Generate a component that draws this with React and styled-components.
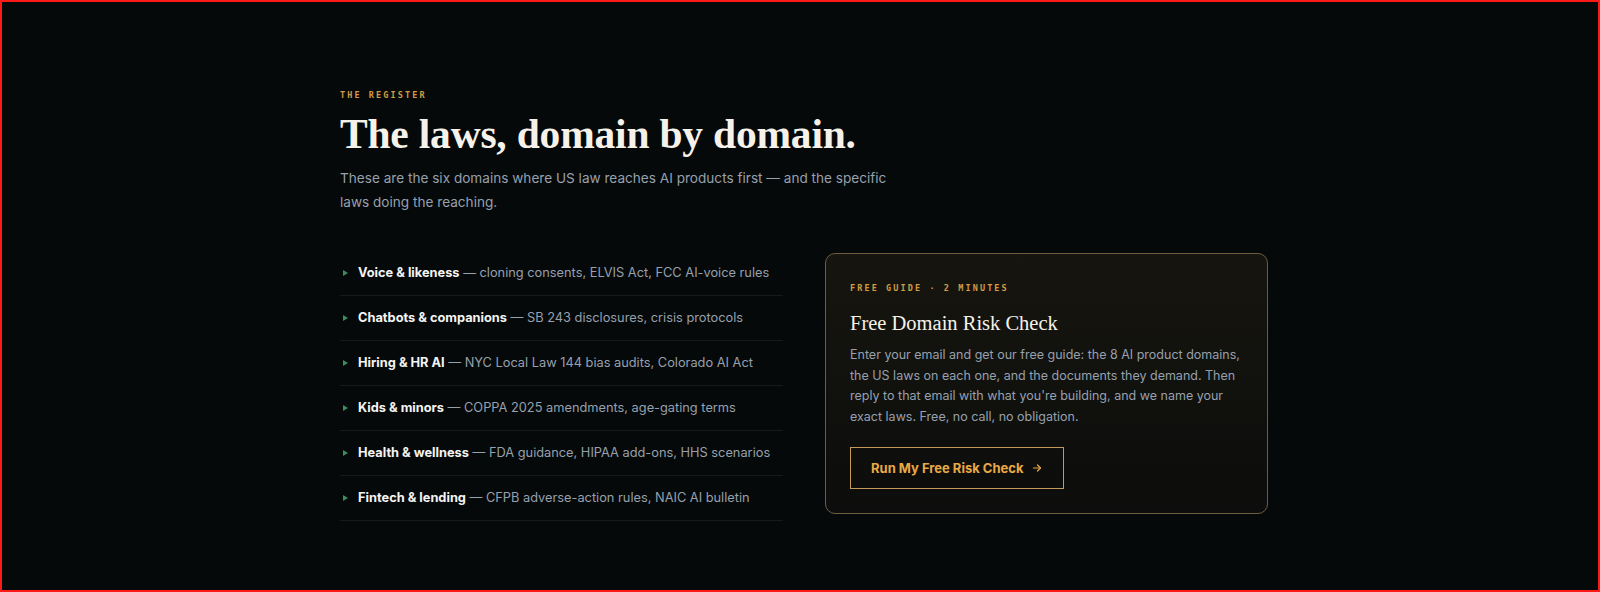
import React from 'react';
import styled, { createGlobalStyle } from 'styled-components';

const GlobalStyle = createGlobalStyle`
    html, body {
        margin: 0;
        padding: 0;
        background: #06090a;
    }
    * {
        box-sizing: border-box;
    }
`;

const domains = [
    { name: 'Voice & likeness', laws: 'cloning consents, ELVIS Act, FCC AI-voice rules' },
    { name: 'Chatbots & companions', laws: 'SB 243 disclosures, crisis protocols' },
    { name: 'Hiring & HR AI', laws: 'NYC Local Law 144 bias audits, Colorado AI Act' },
    { name: 'Kids & minors', laws: 'COPPA 2025 amendments, age-gating terms' },
    { name: 'Health & wellness', laws: 'FDA guidance, HIPAA add-ons, HHS scenarios' },
    { name: 'Fintech & lending', laws: 'CFPB adverse-action rules, NAIC AI bulletin' },
];

const App = () => {
    return (
        <>
            <GlobalStyle />
            <Page>
                <Section>
                    <Eyebrow>The Register</Eyebrow>
                    <Heading>The laws, domain by domain.</Heading>
                    <Lead>
                        These are the six domains where US law reaches AI products first — and the specific
                        laws doing the reaching.
                    </Lead>
                    <Columns>
                        <DomainList>
                            {domains.map((d) => (
                                <DomainRow key={d.name}>
                                    <Bullet />
                                    <p>
                                        <strong>{d.name}</strong> — {d.laws}
                                    </p>
                                </DomainRow>
                            ))}
                        </DomainList>
                        <Card>
                            <Eyebrow>Free Guide · 2 Minutes</Eyebrow>
                            <CardTitle>Free Domain Risk Check</CardTitle>
                            <CardText>
                                Enter your email and get our free guide: the 8 AI product domains, the US laws on
                                each one, and the documents they demand. Then reply to that email with what
                                you're building, and we name your exact laws. Free, no call, no obligation.
                            </CardText>
                            <CheckButton type="button">
                                Run My Free Risk Check
                                <svg width="12" height="12" viewBox="0 0 24 24" fill="none" stroke="currentColor" strokeWidth="2.4" strokeLinecap="round" strokeLinejoin="round">
                                    <path d="M5 12h14" />
                                    <path d="M13 6l6 6-6 6" />
                                </svg>
                            </CheckButton>
                        </Card>
                    </Columns>
                </Section>
            </Page>
        </>
    );
};

export default App;

const Page = styled.div`
    min-height: 100vh;
    border: 2px solid #ff1a1a;
    background: #06090a;
    font-family: Inter, "Noto Sans", sans-serif;
`;

const Section = styled.section`
    width: 928px;
    margin: 0 auto;
    padding: 87px 0 60px;
    transform: translateX(4px);
`;

const Eyebrow = styled.div`
    font-family: "DejaVu Sans Mono", "Liberation Mono", monospace;
    font-size: 8.5px;
    line-height: 12px;
    font-weight: 700;
    letter-spacing: 2.1px;
    text-transform: uppercase;
    color: #d39a45;
`;

const Heading = styled.h1`
    margin: 10px 0 0;
    font-family: "Liberation Serif", "DejaVu Serif", serif;
    font-size: 41.5px;
    line-height: 46px;
    font-weight: 700;
    color: #f6f2ea;
    letter-spacing: -0.2px;
`;

const Lead = styled.p`
    margin: 9px 0 0;
    max-width: 560px;
    font-size: 13.6px;
    line-height: 24px;
    color: #97a0ad;
`;

const Columns = styled.div`
    display: grid;
    grid-template-columns: 443px 443px;
    gap: 42px;
    margin-top: 37px;
    align-items: start;
`;

const DomainList = styled.ul`
    list-style: none;
    margin: 0;
    padding: 0;
`;

const DomainRow = styled.li`
    display: flex;
    align-items: center;
    gap: 10px;
    padding: 14px 0 14px 3px;
    border-bottom: 1px solid #161a1a;

    p {
        margin: 0;
        font-size: 12.8px;
        line-height: 16px;
        color: #97a0ad;
        white-space: nowrap;
    }

    strong {
        color: #f4f4f2;
        font-weight: 700;
    }
`;

const Bullet = styled.span`
    width: 0;
    height: 0;
    border-top: 3px solid transparent;
    border-bottom: 3px solid transparent;
    border-left: 5px solid #3d8c5c;
    flex-shrink: 0;
`;

const Card = styled.div`
    margin-top: 2px;
    padding: 28px 24px 24px;
    border: 1px solid #6e5c3c;
    border-radius: 10px;
    background: linear-gradient(180deg, #16150f 0%, #0c0d0c 100%);
`;

const CardTitle = styled.h2`
    margin: 15px 0 0;
    font-family: "Liberation Serif", "DejaVu Serif", serif;
    font-size: 20.5px;
    line-height: 28px;
    font-weight: 400;
    color: #f6f2ea;
`;

const CardText = styled.p`
    margin: 8px 0 0;
    font-size: 12.5px;
    line-height: 20.5px;
    color: #97a0ad;
`;

const CheckButton = styled.button`
    display: inline-flex;
    align-items: center;
    gap: 8px;
    height: 42px;
    margin-top: 20px;
    padding: 0 20px;
    background: transparent;
    border: 1px solid #c49a5a;
    color: #e9a945;
    font-family: Inter, "Noto Sans", sans-serif;
    font-size: 13px;
    font-weight: 700;
    cursor: pointer;
`;
